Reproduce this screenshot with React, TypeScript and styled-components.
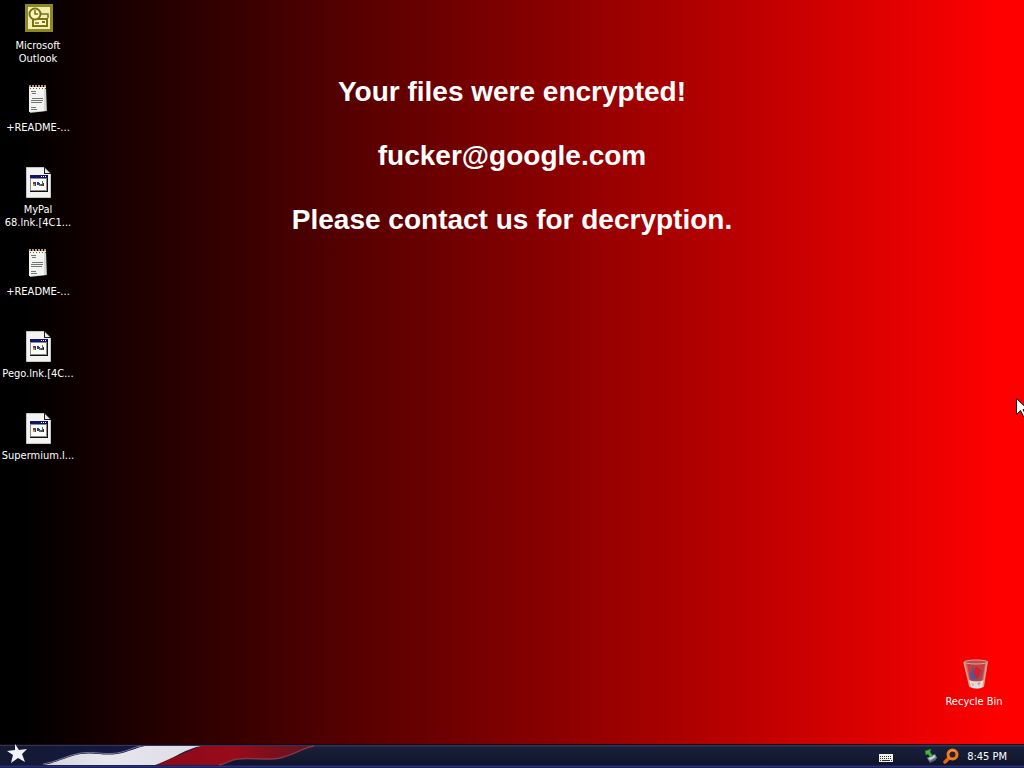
import React from "react";
import styled, { createGlobalStyle } from "styled-components";

const GlobalStyle = createGlobalStyle`
  * { box-sizing: border-box; }
  body { margin: 0; overflow: hidden; }
  button { font: inherit; color: inherit; background: none; border: 0; padding: 0; margin: 0; }
`;

const Screen = styled.div`
  min-height: 100vh;
  display: flex;
  flex-direction: column;
  position: relative;
  overflow: hidden;
  font-family: "DejaVu Sans Condensed", "DejaVu Sans", sans-serif;
  font-size: 11px;
  line-height: 13px;
  color: #fff;
  background: linear-gradient(90deg, #000 2%, #f00 98%);
`;

const Desktop = styled.main`
  flex: 1;
  display: grid;
  grid-template-columns: 88px 1fr 88px;
  padding-top: 2px;
`;

const IconColumn = styled.ul<{ $end?: boolean }>`
  list-style: none;
  margin: 0;
  padding: 0 0 ${(p) => (p.$end ? "4px" : "0")};
  display: flex;
  flex-direction: column;
  justify-content: ${(p) => (p.$end ? "flex-end" : "flex-start")};
`;

const Shortcut = styled.button`
  width: 76px;
  height: 82px;
  display: flex;
  flex-direction: column;
  align-items: center;
  gap: 5px;
  white-space: nowrap;
  text-align: center;
`;

const Message = styled.section`
  padding: 74px 0 0 0;
  display: flex;
  flex-direction: column;
  align-items: center;
  gap: 32px;
`;

const MessageLine = styled.p`
  margin: 0;
  font-family: "Liberation Sans", Arial, sans-serif;
  font-size: 28px;
  line-height: 32px;
  font-weight: 700;
`;

const Taskbar = styled.footer`
  height: 24px;
  display: flex;
  justify-content: space-between;
  background: linear-gradient(#150a18 0 1px, #34344c 1px 2px, #1a1f3c 3px, #141b32 12px, #10132a 21px, #26307a 22px 23px, #101638 24px);
`;

const StartButton = styled.button`
  display: block;
  height: 24px;
`;

const Banner = styled.svg`
  display: block;
`;

const Tray = styled.div`
  display: flex;
  align-items: center;
  padding-right: 17px;
`;

const TrayButton = styled.button<{ $gap: number }>`
  display: flex;
  margin-right: ${(p) => p.$gap}px;
`;

const Clock = styled.time`
  font-size: 11px;
`;

const Pointer = styled.svg`
  position: absolute;
  left: 1016px;
  top: 398px;
`;

function OutlookIcon() {
  return (
    <svg width="32" height="32" viewBox="0 0 32 32" aria-hidden="true">
      <path fill="#8c8823" d="M3 2h28v28H3z" />
      <path fill="#f1eeb0" d="M6 5h22v22H6z" />
      <path fill="#faf6bc" stroke="#77721a" strokeWidth="2" d="M11 17h14v7H11z" />
      <path fill="none" stroke="#77721a" strokeWidth="1.500" d="M18 12h8v4M13 21h4" />
      <path fill="#77721a" d="M20 19h3v2h-3z" />
      <circle cx="13" cy="12" r="5.500" fill="#faf6bc" stroke="#77721a" strokeWidth="2" />
      <path fill="none" stroke="#77721a" strokeWidth="1.500" d="M13 8v4h3" />
    </svg>
  );
}

function NotepadIcon() {
  return (
    <svg width="32" height="32" viewBox="0 0 32 32" aria-hidden="true">
      <path fill="#b9bab8" d="M7 3h17l1 24-17 2z" />
      <path fill="#f3f3ef" d="M7 3h17l-1 24-16 1z" />
      <path fill="#d6d6d2" d="M22 4h2v22l-2 1z" />
      <path stroke="#b3976c" strokeWidth="2" strokeDasharray="2 1" d="M7 2h18" />
      <path stroke="#6b563e" strokeDasharray="1 2" d="M8 4.500h16" />
      <path fill="none" stroke="#73747a" d="M9 7.500h5M10 9.500h4M10 14.500h11M9 16.500h12M9 18.500h11M9 23.500h5M9 25.500h6" />
    </svg>
  );
}

function LinkFileIcon() {
  return (
    <svg width="32" height="32" viewBox="0 0 32 32" aria-hidden="true">
      <path fill="#f3f3f3" stroke="#c6c6c6" d="M4.500 1.500h18l6 6v24h-24z" />
      <path fill="#1b1b1b" d="M22 1h1l6 6v1h-7z" />
      <path fill="#e6e6e6" d="M23 2l5 5h-5z" />
      <path fill="#111" d="M8 9h18v17H8z" />
      <path fill="#8a8a88" d="M8 9h17v16H8z" />
      <path fill="#10146c" d="M8 9h17v3H8z" />
      <path fill="#fbfbf8" d="M9 13h15v11H9zM19 10h1v1h-1zM21 10h1v1h-1zM23 10h1v1h-1z" />
      <path fill="#b22828" d="M11 16h2v2h-2zM19 18h2v2h-2z" />
      <path fill="#263994" d="M13 16h1v4h-1zM15 16h2v3h-2z" />
      <path fill="#c09b2c" d="M11 18h2v2h-2z" />
      <path fill="#238c76" d="M17 18h2v2h-2zM20 15h1v3h-1z" />
      <path fill="#333" d="M17 17h1v1h-1zM21 17h1v3h-1z" />
    </svg>
  );
}

function RecycleBinIcon() {
  return (
    <svg width="32" height="32" viewBox="0 0 32 32" aria-hidden="true">
      <path fill="#d8655f" d="M6 3h24l-4 26q-7 3-14 0z" />
      <path fill="#c23f3e" d="M9 5h18l-3 18H12z" />
      <path fill="#4a599f" d="M14 8l4 6 3 8-8-1-1-7 2-1z" />
      <path fill="#d3202a" d="M18 8l6 5-5 8-4-6z" />
      <path fill="none" stroke="#8c4a68" strokeWidth="1.500" d="M25 13l-6 9" />
      <path fill="#e4dcd8" d="M11 22q7 3 15 0l-1 7q-6 3-13 0z" />
      <path fill="#9db5b2" d="M13 25l3 1-1 2zM19 25l4-1-2 4z" />
      <path fill="none" stroke="#dfa09a" strokeWidth="1.500" d="M6 4l6 25M29 4l-4 25" />
      <ellipse cx="18" cy="4" rx="11.500" ry="2" fill="#c04c49" stroke="#cfa9a2" />
    </svg>
  );
}

function FlagBanner() {
  return (
    <Banner width="340" height="24" viewBox="0 0 340 24" aria-hidden="true">
      <defs>
        <linearGradient id="stripe-red" x1="0" x2="1">
          <stop offset="0" stopColor="#8c0a18" />
          <stop offset=".5" stopColor="#980b1a" />
          <stop offset="1" stopColor="#5d1422" />
        </linearGradient>
        <linearGradient id="field-blue" x1="0" x2="1">
          <stop offset="0" stopColor="#141a30" />
          <stop offset=".6" stopColor="#15183f" />
          <stop offset="1" stopColor="#161648" />
        </linearGradient>
        <linearGradient id="stripe-white" x1="0" x2="1">
          <stop offset="0" stopColor="#d4d4dd" />
          <stop offset=".4" stopColor="#e7e6ed" />
          <stop offset="1" stopColor="#dedce6" />
        </linearGradient>
      </defs>
      <path fill="url(#field-blue)" d="M0 2h146L100 21H0z" />
      <path fill="url(#stripe-red)" d="M201 2h113c-12 2-18 8-34 12-14 3-28-1-42 1-9 1-12 6-20 6h-63z" />
      <path fill="none" stroke="#8b3444" strokeWidth="1.500" d="M314 2c-12 2-18 8-34 12-14 3-28-1-42 1-9 1-12 5-19 6" />
      <path fill="url(#stripe-white)" d="M43 21c14-2 24-9 38-11 14-2 22 2 36 0 12-2 18-6 28-8h56c-16 3-28 13-46 19z" />
      <path fill="none" stroke="#73768f" d="M43 20c14-2 24-9 38-11 14-2 22 2 36 0 12-2 16-6 24-7" />
      <path fill="#f2f3fa" d="M15 0l4 6 8-1-5 5 3 8-7-4-7 5 2-8-6-4 8-1z" />
    </Banner>
  );
}

function KeyboardIcon() {
  return (
    <svg width="14" height="16" viewBox="0 0 14 16" aria-hidden="true">
      <path fill="#f1f1e8" d="M0 6h14v8H0z" />
      <path stroke="#2e3036" strokeDasharray="1 1" d="M1 8.500h12M1 10.500h12" />
      <path stroke="#2e3036" d="M1 12.500h1M3 12.500h8M12 12.500h1" />
    </svg>
  );
}

function EjectIcon() {
  return (
    <svg width="16" height="16" viewBox="0 0 16 16" aria-hidden="true">
      <path fill="#8b959f" d="M4 10l8-4 2 4-7 4z" />
      <path fill="#d3dadd" d="M6 10l5-3 1 2-5 3z" />
      <path fill="#53616b" d="M5 12l2 1 6-3v2l-6 3z" />
      <path fill="#42b83b" stroke="#1e7a2a" strokeWidth=".5" d="M2 3l6-2-1 3 3 4-3 1-2-3-2 1z" />
    </svg>
  );
}

function SearchIcon() {
  return (
    <svg width="16" height="16" viewBox="0 0 16 16" aria-hidden="true">
      <path stroke="#df6710" strokeWidth="3.500" strokeLinecap="round" d="M6 10l-4 4" />
      <circle cx="9.500" cy="6.500" r="4.500" fill="#26202c" stroke="#ee7a1c" strokeWidth="3" />
      <path fill="none" stroke="#ffa04e" d="M6 5q2-4 6-2" />
    </svg>
  );
}

const shortcuts = [
  { id: "outlook", icon: OutlookIcon, lines: ["Microsoft", "Outlook"] },
  { id: "readme-1", icon: NotepadIcon, lines: ["+README-..."] },
  { id: "mypal", icon: LinkFileIcon, lines: ["MyPal", "68.lnk.[4C1..."] },
  { id: "readme-2", icon: NotepadIcon, lines: ["+README-..."] },
  { id: "pego", icon: LinkFileIcon, lines: ["Pego.lnk.[4C..."] },
  { id: "supermium", icon: LinkFileIcon, lines: ["Supermium.l..."] },
];

const message = ["Your files were encrypted!", "fucker@google.com", "Please contact us for decryption."];

export default function App() {
  return (
    <Screen>
      <GlobalStyle />
      <Desktop>
        <IconColumn>
          {shortcuts.map(({ id, icon: Icon, lines }) => (
            <li key={id}>
              <Shortcut type="button">
                <Icon />
                <span>
                  {lines.map((line, i) => (
                    <React.Fragment key={line}>
                      {i > 0 && <br />}
                      {line}
                    </React.Fragment>
                  ))}
                </span>
              </Shortcut>
            </li>
          ))}
        </IconColumn>
        <Message>
          {message.map((line) => (
            <MessageLine key={line}>{line}</MessageLine>
          ))}
        </Message>
        <IconColumn $end>
          <li>
            <Shortcut type="button">
              <RecycleBinIcon />
              <span>Recycle Bin</span>
            </Shortcut>
          </li>
        </IconColumn>
      </Desktop>
      <Taskbar>
        <StartButton type="button" aria-label="Start">
          <FlagBanner />
        </StartButton>
        <Tray>
          <TrayButton type="button" aria-label="Keyboard" $gap={30}>
            <KeyboardIcon />
          </TrayButton>
          <TrayButton type="button" aria-label="Safely remove hardware" $gap={4}>
            <EjectIcon />
          </TrayButton>
          <TrayButton type="button" aria-label="Search" $gap={8}>
            <SearchIcon />
          </TrayButton>
          <Clock>8:45 PM</Clock>
        </Tray>
      </Taskbar>
      <Pointer width="14" height="20" viewBox="0 0 14 20" aria-hidden="true">
        <path fill="#fff" stroke="#111" d="M.5.500v16l4-4 3 6 2.500-1-3-6H12z" />
      </Pointer>
    </Screen>
  );
}
